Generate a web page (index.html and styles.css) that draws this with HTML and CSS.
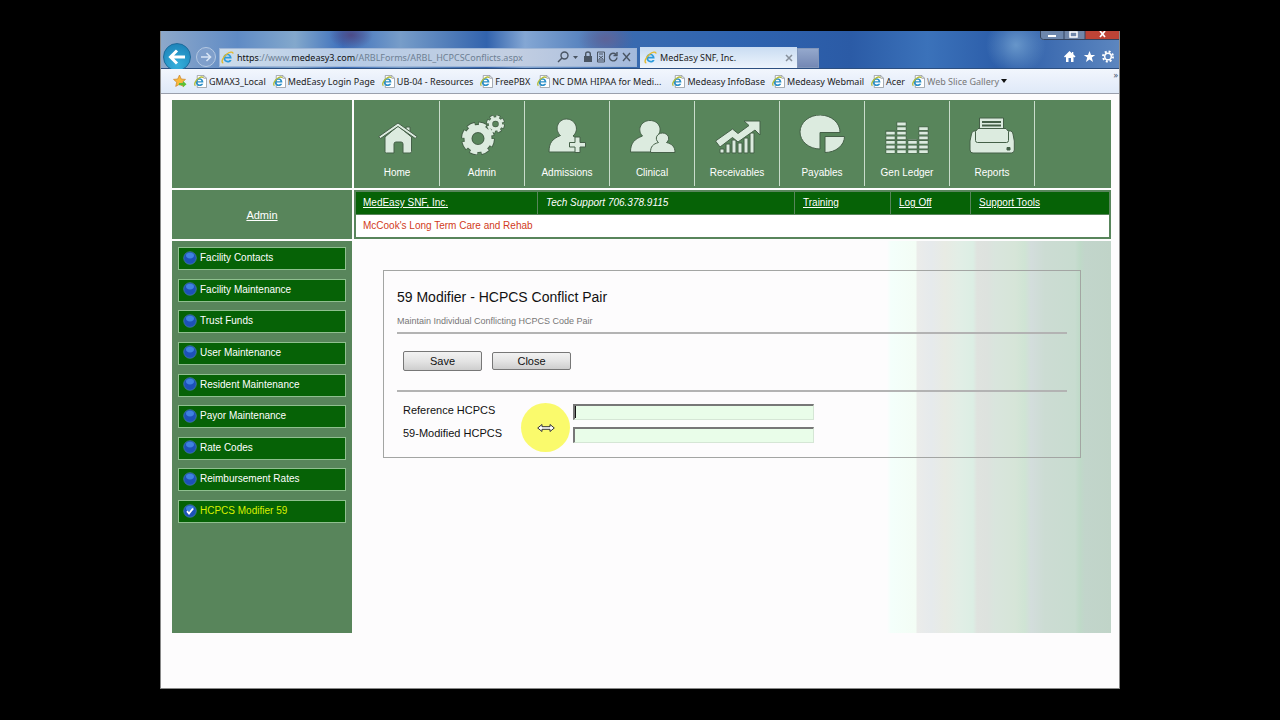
FILE: index.html
```html
<!DOCTYPE html>
<html lang="en">
<head>
    <meta charset="UTF-8">
    <meta name="viewport" content="width=device-width, initial-scale=1.0">
    <link rel="stylesheet" href="styles.css">
    <title>MedEasy SNF, Inc.</title>
</head>
<body>
    <!-- shared icons -->
    <svg class="defs" width="0" height="0">
        <symbol id="ie" viewBox="0 0 14 14">
            <path d="M11.5 8.2H4.6c.2 2.6 3.6 3 4.6 1.4h2.2c-1.6 4.4-8.9 3.6-8.9-2.2 0-5.9 9-6.1 9 .8z M4.7 6.3h4.5c-.3-2.3-4.2-2.3-4.5 0z" fill="#2b9bdc" fill-rule="evenodd"/>
            <path d="M2.5 12.8C-.5 12.5 2 6.5 6 3.5 9 1 13 .2 12.8 2.8" fill="none" stroke="#e3b92c" stroke-width="1.5"/>
        </symbol>
        <symbol id="page" viewBox="0 0 14 14">
            <path d="M3.5 .5h7l3 3v10h-10z" fill="#fff" stroke="#8a8f96" stroke-width=".8"/>
            <path d="M10.5 .5v3h3" fill="none" stroke="#8a8f96" stroke-width=".8"/>
            <path d="M10.2 8.2H3.7c.2 2.3 3.3 2.6 4.2 1.2h2.1c-1.5 4-8.2 3.3-8.2-1.9 0-5.3 8.4-5.5 8.4.7z M3.8 6.7h4.2c-.3-2-3.9-2-4.2 0z" fill="#2a8fc9" fill-rule="evenodd"/>
            <path d="M1.5 11.5C-.5 10 2 5.5 5 3.5 7 2 9.5 1.5 9.5 3.2" fill="none" stroke="#b5bd3a" stroke-width="1.4"/>
        </symbol>
        <symbol id="ball" viewBox="0 0 14 14">
            <circle cx="7" cy="7" r="6.3" fill="#1d51b8" stroke="#4b7fae" stroke-width=".7"/>
            <ellipse cx="7" cy="4.6" rx="4" ry="2.8" fill="#3f82e0"/>
        </symbol>
    </svg>

    <div class="window">
        <div class="titlebar">
            <button type="button" class="back" aria-label="Back">
                <svg width="18" height="16" viewBox="0 0 18 16"><path d="M17 8H3M9 1.5L2.5 8 9 14.5" fill="none" stroke="#fff" stroke-width="3"/></svg>
            </button>
            <button type="button" class="forward" aria-label="Forward">
                <svg width="12" height="10" viewBox="0 0 12 10"><path d="M1 5h9M6.5 1l4 4-4 4" fill="none" stroke="#d7e4f5" stroke-width="1.6"/></svg>
            </button>
            <div class="address">
                <svg width="13" height="13"><use href="#ie"/></svg>
                <span class="url"><b>https</b>://www.<b>medeasy3.com</b>/ARBLForms/ARBL_HCPCSConflicts.aspx</span>
                <svg width="76" height="14" viewBox="0 0 76 14" fill="none" stroke="#4a5563" stroke-width="1.4">
                    <circle cx="7.5" cy="5.5" r="3.5"/><path d="M5 8l-4 4"/>
                    <path d="M16 6h5l-2.5 3z" fill="#4a5563" stroke="none"/>
                    <path d="M27 6h8v6h-8z" fill="#4a5563" stroke="none"/><path d="M28.7 6V4q0-2 2.3-2t2.3 2v2"/>
                    <path d="M40.5 2h7v10h-7zM42 4h4M42 6l4 3M46 6l-4 3M40.5 10h7" stroke-width="1"/>
                    <path d="M59 4.5a3.8 3.8 0 1 0 1 3M60 2v3.5h-3.5"/>
                    <path d="M66 3l7 8M73 3l-7 8"/>
                </svg>
            </div>
            <div class="tab">
                <svg width="13" height="13"><use href="#ie"/></svg>
                <span>MedEasy SNF, Inc.</span>
                <svg width="8" height="8" viewBox="0 0 8 8"><path d="M1 1l6 6M7 1L1 7" stroke="#87909b" stroke-width="1.5"/></svg>
            </div>
            <div class="new-tab"></div>
            <svg class="tools" width="50" height="14" viewBox="0 0 50 14">
                <path d="M5.5 1L0 6.5l1 1L2 6.7V12h2.5V8h2.5v4h2.5V6.7l1 .8 1-1L9.3 4.3V2H8v1.2z" fill="#fff"/>
                <path d="M25.5 1l1.5 4h4.2l-3.4 2.6L29 12l-3.5-2.6L22 12l1.2-4.4L19.8 5H24z" fill="#fff"/>
                <circle cx="44" cy="6.5" r="3.3" fill="none" stroke="#fff" stroke-width="1.5"/>
                <circle cx="44" cy="6.5" r="5" fill="none" stroke="#fff" stroke-width="2" stroke-dasharray="2 1.927"/>
            </svg>
            <svg class="caption" width="79" height="9" viewBox="0 0 79 9">
                <path d="M0 0h24v9H3q-3 0-3-3z" fill="#6d87ad"/>
                <path d="M24 0h21v9H24z" fill="#7187a9"/>
                <path d="M45 0h34v9H45z" fill="#bd4436"/>
                <path d="M.5 0v6q0 2.5 3 2.5H79M24 0v9M45 0v9" fill="none" stroke="#33435e"/>
                <path d="M8 4h8v2H8z" fill="#fff"/>
                <path d="M30 1h7v5h-7z" fill="none" stroke="#fff" stroke-width="1.5"/>
                <path d="M60 0l5 6M65 0l-5 6" stroke="#fff" stroke-width="1.7"/>
            </svg>
        </div>

        <div class="bookmarks">
            <svg width="14" height="14" viewBox="0 0 14 14">
                <path d="M6.5 1l1.8 4 4.2.4-3.2 2.8 1 4.2-3.8-2.2-3.8 2.2 1-4.2L.5 5.4l4.2-.4z" fill="#f9b93a" stroke="#c9822a" stroke-width=".7"/>
                <path d="M6 9h4V7l3.5 3.2L10 13.3v-2H6z" fill="#5cc034"/>
            </svg>
            <a href="#"><svg width="13" height="13"><use href="#page"/></svg>GMAX3_Local</a>
            <a href="#"><svg width="13" height="13"><use href="#page"/></svg>MedEasy Login Page</a>
            <a href="#"><svg width="13" height="13"><use href="#page"/></svg>UB-04 - Resources</a>
            <a href="#"><svg width="13" height="13"><use href="#page"/></svg>FreePBX</a>
            <a href="#" class="long"><svg width="13" height="13"><use href="#page"/></svg>NC DMA HIPAA for Medi...</a>
            <a href="#"><svg width="13" height="13"><use href="#page"/></svg>Medeasy InfoBase</a>
            <a href="#"><svg width="13" height="13"><use href="#page"/></svg>Medeasy Webmail</a>
            <a href="#"><svg width="13" height="13"><use href="#page"/></svg>Acer</a>
            <a href="#" class="slice"><svg width="13" height="13"><use href="#page"/></svg>Web Slice Gallery <svg width="6" height="4" viewBox="0 0 6 4"><path d="M0 0h6L3 4z" fill="#111"/></svg></a>
            <span class="more">&raquo;</span>
        </div>

        <div class="page">
            <div class="logo"></div>

            <nav class="main-nav">
                <a href="#">
                    <svg viewBox="0 0 48 40">
                        <path d="M12 22L25 11l13.5 11v14.5q0 1.5-1.5 1.5h-7V29q0-2-2-2h-5q-2 0-2 2v9h-7.5q-1.5 0-1.5-1.5z"/>
                        <path d="M33 16V12h4v8z"/>
                        <path d="M7.5 23.5L5.8 21.5 25 8l19 13.5-1.7 2L25 11.5z"/>
                    </svg>Home
                </a>
                <a href="#">
                    <svg viewBox="0 0 48 40">
                        <g fill="none" stroke="#456048">
                            <circle cx="20" cy="23.5" r="13.5" stroke-width="7" stroke-dasharray="7.6 3"/>
                            <circle cx="20" cy="23.5" r="10" stroke-width="9"/>
                            <circle cx="37.5" cy="9" r="7" stroke-width="5" stroke-dasharray="4 1.5"/>
                            <circle cx="37.5" cy="9" r="5" stroke-width="5"/>
                        </g>
                        <g fill="none" stroke="#dcebdf">
                            <circle cx="20" cy="23.5" r="13.5" stroke-width="5" stroke-dasharray="6.6 4" stroke-dashoffset="-.5"/>
                            <circle cx="20" cy="23.5" r="10" stroke-width="7"/>
                            <circle cx="37.5" cy="9" r="7" stroke-width="3.4" stroke-dasharray="3 2.5" stroke-dashoffset="-.5"/>
                            <circle cx="37.5" cy="9" r="5" stroke-width="3.5"/>
                        </g>
                    </svg>Admin
                </a>
                <a href="#">
                    <svg viewBox="0 0 48 40">
                        <path d="M6 37c0-9 3-13 11.5-16.5C11 15 14.5 4 23.5 4S37 15 30 21q3 1 4 3v13z"/>
                        <path d="M32 22h5v5.5h5.5V32H37v5.5h-5V32h-5.500v-4.5H32z"/>
                    </svg>Admissions
                </a>
                <a href="#">
                    <svg viewBox="0 0 48 40">
                        <path d="M2.5 37c0-9 4-13 12-16C8.5 15 13 5.5 22 5.5S35.5 15 29 21.5q5 2 6 7.5v8z"/>
                        <path d="M22.5 37.5c0-6 2.5-8.5 8-10-4.5-3.5-1.5-9.5 4-9.5s8.5 6 4 9.5c5.5 1.5 8.5 4 8.5 10z"/>
                    </svg>Clinical
                </a>
                <a href="#">
                    <svg viewBox="0 0 48 40">
                        <path d="M7 34h4v4H7zM13 29h4v9h-4zM19 25h4v13h-4zM25 28h4v10h-4zM31 23h4v15h-4zM37 18h4v20h-4z"/>
                        <path d="M2.5 26L19.5 14l5.5 4.5 11-8L31 6h16v14l-5-5L25 27l-5.5-4.5L7 32z"/>
                    </svg>Receivables
                </a>
                <a href="#">
                    <svg viewBox="0 0 48 40">
                        <path d="M22 17.5V34A20 17 0 1 1 42 17.5z"/>
                        <path d="M27 21.5h19.5A19.5 16 0 0 1 27 37.5z"/>
                    </svg>Payables
                </a>
                <a href="#">
                    <svg viewBox="0 0 48 40">
                        <g fill="none">
                            <path d="M7.5 38.5V15M18.5 38.5V6M29.5 38.5V24M40.5 38.5V11" stroke="#456048" stroke-width="10" stroke-dasharray="4 .6"/>
                            <path d="M7.5 38V15M18.5 38V6M29.5 38V24M40.5 38V11" stroke="#dcebdf" stroke-width="8.5" stroke-dasharray="2.8 1.8"/>
                        </g>
                    </svg>Gen Ledger
                </a>
                <a href="#">
                    <svg viewBox="0 0 48 40">
                        <path d="M11.5 3h24v12h-24z"/>
                        <path d="M14 7h19M14 10.5h19" stroke-width="2"/>
                        <path d="M6 16h36.5q2 0 2.5 3l1.3 7v9q0 3-3 3H5q-3 0-3-3v-9l1.5-7q.5-3 2.5-3z"/>
                        <path d="M10 13.5h28l2.5 3v9q0 2-2 2h-29q-2 0-2-2v-9z"/>
                        <path d="M39 32.5h3V35h-3z" fill="#456048"/>
                    </svg>Reports
                </a>
            </nav>

            <div class="section"><a href="#">Admin</a></div>

            <div class="info">
                <div class="info-links">
                    <span><a href="#">MedEasy SNF, Inc.</a></span>
                    <span><i>Tech Support 706.378.9115</i></span>
                    <span><a href="#">Training</a></span>
                    <span><a href="#">Log Off</a></span>
                    <span><a href="#">Support Tools</a></span>
                </div>
                <div class="facility">McCook's Long Term Care and Rehab</div>
            </div>

            <aside class="sidebar">
                <nav class="side-menu">
                    <a href="#"><svg width="14" height="14"><use href="#ball"/></svg>Facility Contacts</a>
                    <a href="#"><svg width="14" height="14"><use href="#ball"/></svg>Facility Maintenance</a>
                    <a href="#"><svg width="14" height="14"><use href="#ball"/></svg>Trust Funds</a>
                    <a href="#"><svg width="14" height="14"><use href="#ball"/></svg>User Maintenance</a>
                    <a href="#"><svg width="14" height="14"><use href="#ball"/></svg>Resident Maintenance</a>
                    <a href="#"><svg width="14" height="14"><use href="#ball"/></svg>Payor Maintenance</a>
                    <a href="#"><svg width="14" height="14"><use href="#ball"/></svg>Rate Codes</a>
                    <a href="#"><svg width="14" height="14"><use href="#ball"/></svg>Reimbursement Rates</a>
                    <a href="#" class="active"><svg width="14" height="14" viewBox="0 0 14 14"><use href="#ball"/><path d="M4 7.2l2 2.3L10 4.5" fill="none" stroke="#fff" stroke-width="1.8"/></svg>HCPCS Modifier 59</a>
                </nav>
            </aside>

            <main class="content">
                <form class="panel" id="conflictForm">
                    <h1>59 Modifier - HCPCS Conflict Pair</h1>
                    <p>Maintain Individual Conflicting HCPCS Code Pair</p>
                    <hr>
                    <div class="buttons">
                        <button type="button" class="save">Save</button>
                        <button type="button">Close</button>
                    </div>
                    <hr>
                    <div class="field">
                        <label for="reference">Reference HCPCS</label>
                        <input type="text" id="reference" name="reference">
                        <span class="caret"></span>
                    </div>
                    <div class="field">
                        <label for="modified">59-Modified HCPCS</label>
                        <input type="text" id="modified" name="modified">
                    </div>
                    <div class="pointer">
                        <svg width="18" height="10" viewBox="0 0 18 10"><path d="M.7 5L5 1.5v2.2h8V1.5L17.3 5 13 8.5V6.3H5v2.2z" fill="#fff" stroke="#333"/></svg>
                    </div>
                </form>
            </main>
        </div>
    </div>
</body>
</html>
```

FILE: styles.css
```css
* {
    box-sizing: border-box;
}

body {
    margin: 0;
    padding: 31px 160px;
    min-height: 100vh;
    display: flex;
    background: #000;
    font-family: "Liberation Sans", Arial, sans-serif;
    font-size: 10px;
}

svg {
    display: block;
    flex-shrink: 0;
}

.defs {
    position: absolute;
}

.window {
    flex: 1;
    min-width: 0;
    display: flex;
    flex-direction: column;
    background: #fdfcfd;
    border: 1px solid #888;
    border-top: 0;
}

/* browser chrome */
.titlebar {
    position: relative;
    height: 38px;
    padding: 15px 5px 0 2px;
    display: flex;
    align-items: center;
    border-bottom: 1px solid #2c4f80;
    background:
        radial-gradient(ellipse 22px 14px at 190px 4px, #4c4a86, transparent),
        radial-gradient(ellipse 28px 18px at 445px 8px, #5d6398, transparent),
        radial-gradient(ellipse 30px 30px at 855px 14px, #6796ca, transparent),
        linear-gradient(90deg, #8da8ca 0, #5f8bc5 8%, #83a8cc 14%, #3c6fbc 19%, #779dc9 25%, #3263ad 34%, #84a7d4 38%, #3a6bb0 48%, #2f64b0 60%, #2b5ba6 72%, #3b72ba 80%, #2b5ca8 88%, #5c86bf 100%);
    font-family: "Noto Sans", sans-serif;
    font-size: 9px;
    color: #222;
}

.back,
.forward {
    flex-shrink: 0;
    display: flex;
    align-items: center;
    justify-content: center;
    padding: 0;
    border-radius: 50%;
}

.back {
    width: 28px;
    height: 28px;
    border: 1px solid #1d6b9c;
    background: radial-gradient(circle at 50% 80%, #35b0dc, #1a7db4);
}

.forward {
    width: 20px;
    height: 20px;
    margin: 0 3px 0 5px;
    border: 1px solid #b5c9e2;
    background: #7f9fcb;
}

.address {
    width: 418px;
    height: 19px;
    padding: 0 3px 0 1px;
    display: flex;
    align-items: center;
    gap: 3px;
    border: 1px solid #9fb6d6;
    background: linear-gradient(90deg, #cddcea, #b6cbe6 30%, #c3cfe2 70%, #a3b9dc);
}

.url {
    flex: 1;
    white-space: nowrap;
    color: #6d7f93;
}

.url b {
    font-weight: normal;
    color: #111;
}

.tab {
    align-self: flex-end;
    width: 157px;
    height: 21px;
    margin-left: 3px;
    padding: 0 4px;
    display: flex;
    align-items: center;
    gap: 3px;
    background: linear-gradient(#c9dcf2, #edf4fc);
}

.tab span {
    flex: 1;
}

.new-tab {
    align-self: flex-end;
    width: 22px;
    height: 20px;
    border: 1px solid #8297bb;
    background: linear-gradient(#94a8cc, #7488b4);
}

.tools {
    margin-left: auto;
}

.caption {
    position: absolute;
    top: 0;
    right: 0;
}

.bookmarks {
    position: relative;
    height: 25px;
    padding-left: 12px;
    display: flex;
    align-items: center;
    gap: 7px;
    border-bottom: 1px solid #9a9fac;
    background: linear-gradient(#f2f6fd, #dfe9f8);
    font-family: "Noto Sans", sans-serif;
    font-size: 9px;
    white-space: nowrap;
}

.bookmarks a {
    display: flex;
    align-items: center;
    gap: 2px;
    color: #222;
    text-decoration: none;
}

.bookmarks .slice {
    color: #777;
}

.bookmarks .long {
    margin-right: 4px;
}

.more {
    position: absolute;
    top: -1px;
    right: 1px;
    color: #44536e;
}

/* page */
.page {
    padding: 6px 8px 0 11px;
    display: grid;
    grid-template-columns: 180px 1fr;
    grid-template-rows: 88px 49px minmax(392px, auto);
    gap: 2px;
}

.logo,
.main-nav,
.section,
.sidebar {
    background: #58855b;
}

.main-nav {
    display: flex;
    padding: 1px 0 2px 1px;
}

.main-nav a {
    width: 85px;
    padding-top: 14px;
    display: flex;
    flex-direction: column;
    align-items: center;
    gap: 11px;
    border-right: 1px solid #c9dccb;
    color: #fff;
    line-height: 14px;
    text-decoration: none;
}

.main-nav svg {
    width: 48px;
    height: 40px;
    fill: #dcebdf;
    stroke: #456048;
    stroke-width: 1;
}

.section {
    display: flex;
    align-items: center;
    justify-content: center;
    font-size: 11px;
}

.section a,
.info a {
    color: #fff;
}

.info {
    border: 2px solid #58855b;
    background: #fff;
}

.info-links {
    height: 23px;
    display: grid;
    grid-template-columns: 182px 257px 96px 80px 1fr;
    line-height: 22px;
    background: #066206;
    border-bottom: 1px solid #58855b;
    color: #fff;
}

.info-links span {
    padding-left: 8px;
    border-right: 1px solid #58855b;
}

.info-links span:first-child {
    padding-left: 7px;
}

.info-links span:last-child {
    border: 0;
}

.facility {
    padding-left: 7px;
    line-height: 22px;
    color: #d13b22;
}

.sidebar {
    padding: 6px;
}

.side-menu {
    height: 276px;
    display: flex;
    flex-direction: column;
    justify-content: space-between;
}

.side-menu a {
    height: 23px;
    padding: 0 4px 2px;
    display: flex;
    align-items: center;
    gap: 3px;
    border: 1px solid #8fc08f;
    background: #066206;
    color: #fff;
    text-decoration: none;
}

.side-menu .active {
    color: #d8f000;
}

.content {
    padding: 29px 30px 0 29px;
    background: linear-gradient(90deg, #fdfcfd 0, #f4fffb 4px, #f3fdf5 29px, #ebecea 30px, #e6eaec 44px, #e8ebe4 58px, #e2eee6 72px, #dceee4 86px, #dfe3df 90px, #dde2de 100px, #d9e5dd 108px, #d6e5d8 128px, #cfe4d4 138px, #d3dddc 144px, #ccdcd3 158px, #c8dcd0 188px, #bfdac8 193px, #c2d5cb 198px, #c0d4c8 224px) right top / 224px 100% no-repeat;
}

.panel {
    position: relative;
    height: 188px;
    padding: 16px 13px;
    border: 1px solid #a3a5a3;
    font-size: 11px;
    color: #111;
}

.panel h1 {
    margin: 0;
    font-size: 14px;
    font-weight: normal;
    line-height: 20px;
}

.panel p {
    margin: 7px 0 4px;
    font-size: 9px;
    line-height: 14px;
    color: #777;
}

hr {
    height: 2px;
    margin: 0;
    border: 0;
    background: #b3b3b3;
}

.buttons {
    height: 56px;
    padding: 0 0 2px 6px;
    display: flex;
    align-items: center;
    gap: 10px;
}

.buttons button {
    width: 79px;
    height: 18px;
    padding: 0;
    border: 1px solid #777;
    border-radius: 2px;
    background: linear-gradient(#f2f2f2, #e4e4e4 50%, #cecece);
    font-family: inherit;
    font-size: 11px;
    color: #111;
}

.buttons .save {
    height: 20px;
}

.field {
    position: relative;
    height: 23px;
    padding-left: 6px;
    display: flex;
    align-items: flex-start;
}

hr + .field {
    margin-top: 12px;
}

.field label {
    width: 170px;
    line-height: 12px;
}

.field input {
    width: 241px;
    height: 16px;
    padding: 0 2px;
    border: 1px solid #d5e6d5;
    border-top: 2px solid #777;
    border-left: 2px solid #777;
    background: #e9fde9;
    font-size: 11px;
}

.caret {
    position: absolute;
    left: 178px;
    top: 2px;
    width: 1px;
    height: 12px;
    background: #111;
}

/* mouse highlight */
.pointer {
    position: absolute;
    left: 137px;
    top: 132px;
    width: 49px;
    height: 49px;
    display: flex;
    align-items: center;
    justify-content: center;
    border-radius: 50%;
    background: #fafa6c;
}
```
